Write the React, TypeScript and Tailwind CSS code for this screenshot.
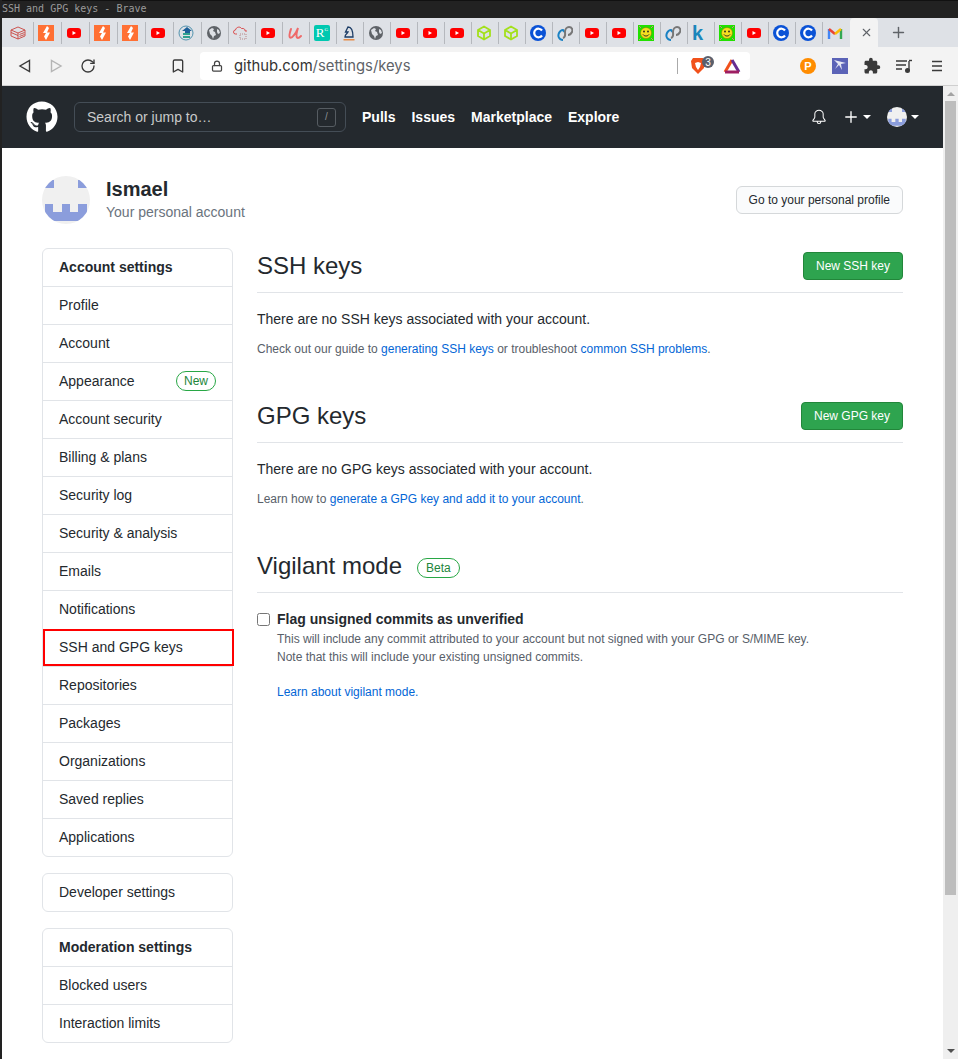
import { GoBell } from 'react-icons/go';
import { FaGithub } from 'react-icons/fa';
import { MdExtension } from 'react-icons/md';
import { Bookmark, Lock, RotateCw, Plus, X } from 'lucide-react';

const YouTube = () => (
  <svg width="16" height="16" viewBox="0 0 16 16">
    <rect x="1" y="3" width="14" height="10" rx="3" fill="#ff0000" />
    <path d="M6.500 6 10 8l-3.500 2z" fill="#fff" />
  </svg>
);

const Bolt = () => (
  <svg width="16" height="16" viewBox="0 0 16 16">
    <rect width="16" height="16" fill="#ff7034" />
    <path d="M9 1 5 8h3l-2 3.500L8 15l4-7.500H9l2-4.500z" fill="#fff" />
  </svg>
);

const Globe = () => (
  <svg width="16" height="16" viewBox="0 0 16 16">
    <circle cx="8" cy="8" r="7" fill="#5f6368" />
    <path d="M3 5l3-2 2 1-1 2 2 1 1 3-2 1-1 3-1-3-2-2zM11 4l2 1 1 3-2 1-1-2z" fill="#dee1e6" />
  </svg>
);

const Cube = () => (
  <svg width="16" height="16" viewBox="0 0 16 16" fill="none" stroke="#a3e01b" strokeWidth="1.800">
    <path d="M8 1.500 14 5v6l-6 3.500L2 11V5zM2 5l6 3.500L14 5M8 8.500v6" />
  </svg>
);

const BlueC = () => (
  <svg width="16" height="16" viewBox="0 0 16 16">
    <circle cx="8" cy="8" r="8" fill="#0a52d6" />
    <path d="M12 5.500a4.300 4.300 0 1 0 0 5" fill="none" stroke="#fff" strokeWidth="2.200" />
  </svg>
);

const Swirl = () => (
  <svg width="16" height="16" viewBox="0 0 16 16" fill="none" strokeWidth="2">
    <path d="M6 15C2 15 0.500 11 2 8c1-2 3-3 4-3l1.500 2" stroke="#1a82c4" />
    <path d="M6 13c3-1 2-4 2-6 0-3 2-5 4-5 3 0 4 3 3 5-1 2-3 3-4 3" stroke="#777" />
  </svg>
);

const Smiley = () => (
  <svg width="16" height="16" viewBox="0 0 16 16">
    <rect width="16" height="16" fill="#22e000" />
    <circle cx="8" cy="8" r="5.500" fill="#f5e020" stroke="#887000" strokeWidth="0.500" />
    <circle cx="6" cy="6.500" r="0.900" fill="#222" />
    <circle cx="10" cy="6.500" r="0.900" fill="#222" />
    <path d="M5 9.500c1.500 2 4.500 2 6 0" fill="none" stroke="#222" />
    <path d="M1 1l2 2M15 1l-2 2M1 15l2-2M15 15l-2-2" stroke="#c88" />
  </svg>
);

const Gmail = () => (
  <svg width="16" height="16" viewBox="0 0 16 16" fill="none" strokeWidth="2.400">
    <path d="M2 14V4" stroke="#4285f4" />
    <path d="M14 14V4" stroke="#34a853" />
    <path d="M2 4l6 5" stroke="#ea4335" />
    <path d="M8 9l6-5" stroke="#fbbc04" />
  </svg>
);

const Stack = () => (
  <svg width="16" height="16" viewBox="0 0 16 16" fill="none" stroke="#c9453f" strokeWidth="0.900">
    <path d="M1 5l7-3 7 3-7 3zM1 5v6l7 3 7-3V5M8 8v6M9.500 9.500l5-2M9.500 11.500l5-2" />
    <path d="M1 7.500l7 3" />
  </svg>
);

const Edu = () => (
  <svg width="16" height="16" viewBox="0 0 16 16">
    <circle cx="8" cy="8" r="7" fill="none" stroke="#2f7f9f" strokeWidth="0.800" />
    <rect x="5" y="8" width="7" height="2" fill="#2fa08f" />
    <rect x="5" y="11" width="7" height="2" fill="#2fa08f" />
    <path d="M9 2l5 4h-2v2H7V6H4z" fill="#1c5f98" />
  </svg>
);

const CloudRed = () => (
  <svg width="16" height="16" viewBox="0 0 16 16" fill="none" stroke="#d94040" strokeWidth="0.900">
    <path d="M4 9H2.500a2 2 0 0 1 0-4C3 2 7 1 8.500 3.500 11 3 12.500 4.500 12 6h2" />
    <path d="M7 9h6v5H7z" strokeDasharray="1 1" stroke="#b08080" />
  </svg>
);

const Udemy = () => (
  <svg width="16" height="16" viewBox="0 0 16 16" fill="none" stroke="#ee6a6a" strokeWidth="2" strokeLinecap="round">
    <path d="M4 4C3 7 1.500 11 3 12.500 5 14 9 8 11 3c-1 3-2 8-1 9.500 1 1 2.500 0 4-1.500" />
  </svg>
);

const RG = () => (
  <div className="flex h-4 w-4 items-center justify-center rounded-[2px] bg-[#00c8b0] font-['Liberation_Serif',serif] text-[13px] leading-none text-white">
    R<span className="mb-[6px] text-[5px]">G</span>
  </div>
);

const Knight = () => (
  <svg width="16" height="16" viewBox="0 0 16 16" fill="none">
    <path d="M4 12c0-3 2-3 3-5L4.500 7 7 2c4 0 5 4 5 10z" stroke="#1d3d66" strokeWidth="1.300" />
    <path d="M2.500 14.800h11" stroke="#e8761f" strokeWidth="1.200" />
  </svg>
);

const K = () => <span className="text-[20px] leading-4 font-bold text-[#1a86bb]">k</span>;

const tabIcons = [
  <Stack />, <Bolt />, <YouTube />, <Bolt />, <Bolt />, <YouTube />, <Edu />, <Globe />, <CloudRed />, <YouTube />,
  <Udemy />, <RG />, <Knight />, <Globe />, <YouTube />, <YouTube />, <YouTube />, <Cube />, <Cube />, <BlueC />,
  <Swirl />, <YouTube />, <YouTube />, <Smiley />, <Swirl />, <K />, <Smiley />, <YouTube />, <BlueC />, <BlueC />,
  <Gmail />,
];

const accountLinks = [
  'Profile',
  'Account',
  'Appearance',
  'Account security',
  'Billing & plans',
  'Security log',
  'Security & analysis',
  'Emails',
  'Notifications',
  'SSH and GPG keys',
  'Repositories',
  'Packages',
  'Organizations',
  'Saved replies',
  'Applications',
];

const Avatar = ({ size }: { size: number }) => (
  <svg width={size} height={size} viewBox="0 0 48 48" className="block">
    <rect width="48" height="48" fill="#f0f0f0" />
    <path d="M3 4h9v8H3zM36 4h9v8h-9z" fill="#8b9ddc" />
    <path d="M3 28h8v8h9v-8h8v8h8v-8h9v17H3z" fill="#8b9ddc" />
  </svg>
);

const SideRow = ({ label, head, boxed }: { label: string; head?: boolean; boxed?: boolean }) => (
  <div
    className={`flex items-center justify-between pb-px text-sm ${head ? 'font-bold' : ''} ${
      boxed
        ? 'mr-[-2px] mt-px h-[37px] border-2 border-[#ff0000] pl-[14px] pr-4'
        : 'h-[38px] border-t border-[#e1e4e8] px-4 first:h-[37px] first:border-t-0'
    }`}
  >
    {label}
    {label === 'Appearance' && (
      <span className="rounded-full border border-[#28a745] px-[7px] text-xs leading-[18px] text-[#22863a]">New</span>
    )}
  </div>
);

const SectionHead = ({ title, button }: { title: string; button?: string }) => (
  <div className="flex h-[45px] items-start justify-between border-b border-[#e1e4e8] pt-1">
    <h2 className="text-2xl leading-[28px] font-normal">{title}</h2>
    {button && (
      <button className="h-[28px] rounded-[4px] border border-[#22863a] bg-[#2ea44f] px-3 text-xs text-white">
        {button}
      </button>
    )}
  </div>
);

export default function App() {
  return (
    <div className="flex h-[1059px] w-[958px] flex-col overflow-hidden border-l-2 border-[#222222] bg-white font-['Liberation_Sans',sans-serif] text-[#24292e]">
      <div className="ml-[-2px] h-[18px] shrink-0 border-t border-[#111111] bg-[#222222] pl-[2px] font-['DejaVu_Sans_Mono',monospace] text-[10px] leading-[16px] text-[#9a9a9a]">
        SSH and GPG keys - Brave
      </div>

      {/* tab strip */}
      <div className="flex h-[29px] shrink-0 items-center bg-[#dee1e6] pl-[4px]">
        {tabIcons.map((icon, i) => (
          <div
            key={i}
            className={`flex h-[22px] shrink-0 items-center pl-[4px] ${i < 7 ? 'w-[28px]' : 'w-[27px]'} ${
              i < 30 ? 'border-r border-[#b5b8bd]' : ''
            }`}
          >
            {icon}
          </div>
        ))}
        <div className="flex h-[29px] w-[28px] shrink-0 items-center justify-center rounded-t-[4px] bg-[#f3f3f3] pl-[4px]">
          <X size={13} className="text-[#5f6368]" strokeWidth={2} />
        </div>
        <Plus size={17} className="ml-[12px] text-[#5f6368]" strokeWidth={2} />
      </div>

      {/* toolbar */}
      <div className="flex h-[39px] shrink-0 items-center border-b border-[#cfcfcf] bg-[#f3f3f3]">
        <svg width="16" height="16" viewBox="0 0 16 16" className="ml-[15px]" fill="none" stroke="#3a3a3a" strokeWidth="1.400">
          <path d="M12.500 2.500v11L3 8z" />
        </svg>
        <svg width="16" height="16" viewBox="0 0 16 16" className="ml-[15px]" fill="none" stroke="#b5b5b5" strokeWidth="1.400">
          <path d="M3.500 2.500v11L13 8z" />
        </svg>
        <RotateCw size={16} className="ml-[16px] text-[#3a3a3a]" strokeWidth={2} />
        <Bookmark size={16} className="ml-[74px] text-[#3a3a3a]" strokeWidth={2} />
        <div className="ml-[14px] flex h-[28px] w-[550px] items-center rounded-[4px] bg-white pl-[11px] pr-[9px]">
          <Lock size={12} className="text-[#444444]" strokeWidth={2.500} />
          <span className="ml-[11px] font-['Inter',sans-serif] text-[14.800px] text-[#5f6368]">
            <span className="text-[#333333]">github.com</span>/settings/keys
          </span>
          <div className="ml-auto h-4 w-px bg-[#aaaaaa]" />
          <div className="relative ml-[12px]">
            <svg width="16" height="18" viewBox="0 0 16 18" className="block">
              <path d="M3 1h10l2 3-1 7-6 6-6-6-1-7z" fill="#f1511b" />
              <path d="M5 6l3-1 3 1-1 4-2 3-2-3z" fill="#fff" />
            </svg>
            <span className="absolute left-[12px] top-[-1px] flex h-3 w-3 items-center justify-center rounded-full bg-[#5a5f6b] text-[10px] text-white">
              3
            </span>
          </div>
          <svg width="18" height="16" viewBox="0 0 18 16" className="ml-[17px]" fill="none" strokeWidth="3">
            <path d="M9 2 2 14" stroke="#f1511b" />
            <path d="M9 2l7 12" stroke="#662d91" />
            <path d="M2 14h14" stroke="#9e1f63" />
          </svg>
        </div>
        <div className="ml-[50px] flex h-4 w-4 items-center justify-center rounded-full bg-[#ff8c00] text-[11px] font-bold leading-none text-white">P</div>
        <svg width="16" height="16" viewBox="0 0 16 16" className="ml-[16px]">
          <rect width="16" height="16" fill="#5b63b7" />
          <path d="M2 2l12 3-5 1 1 6-3-5-4 4 3-5z" fill="#ffffff" opacity="0.850" />
        </svg>
        <MdExtension size={18} className="ml-[15px] text-[#3a3a3a]" />
        <svg width="18" height="16" viewBox="0 0 18 16" className="ml-[14px]" fill="none" stroke="#3a3a3a" strokeWidth="1.400">
          <path d="M1 3h11M1 7h10M1 11h6M14 3v9" />
          <circle cx="12.500" cy="12.500" r="1.800" fill="#3a3a3a" />
          <path d="M14 2.500h3" />
        </svg>
        <svg width="14" height="14" viewBox="0 0 14 14" className="ml-[17px]" stroke="#3a3a3a" strokeWidth="1.500">
          <path d="M2 2.500h10M2 7h10M2 11.500h10" />
        </svg>
      </div>

      <div className="flex min-h-0 flex-1">
        <div className="flex min-w-0 flex-1 flex-col">
          {/* github header */}
          <header className="flex h-[62px] shrink-0 items-center bg-[#24292e] px-6 text-white">
            <FaGithub size={32} />
            <div className="ml-4 flex h-[30px] w-[272px] items-center justify-between rounded-[6px] border border-[#444d56] pl-3 pr-[9px] text-sm text-[#c8c9ca]">
              Search or jump to…
              <span className="flex h-[19px] w-[19px] items-center justify-center rounded-[3px] border border-[#565c62] text-[10px] text-[#8b9095]">/</span>
            </div>
            <nav className="ml-4 flex gap-4 text-sm font-bold">
              <span>Pulls</span>
              <span>Issues</span>
              <span>Marketplace</span>
              <span>Explore</span>
            </nav>
            <GoBell size={16} className="ml-auto" />
            <Plus size={18} className="ml-[15px]" strokeWidth={1.800} />
            <span className="ml-[3px] h-0 w-0 border-x-4 border-t-4 border-x-transparent border-t-white" />
            <div className="ml-[16px] h-5 w-5 overflow-hidden rounded-full">
              <Avatar size={20} />
            </div>
            <span className="ml-[4px] h-0 w-0 border-x-4 border-t-4 border-x-transparent border-t-white" />
          </header>

          <main className="min-h-0 flex-1 px-10 pt-7">
            {/* account heading */}
            <div className="flex h-[48px] items-center">
              <div className="h-12 w-12 overflow-hidden rounded-full">
                <Avatar size={48} />
              </div>
              <div className="mb-[2px] ml-4">
                <div className="text-xl font-bold leading-[26px]">Ismael</div>
                <div className="text-sm leading-[20px] text-[#6a737d]">Your personal account</div>
              </div>
              <button className="ml-auto h-[28px] rounded-[6px] border border-[#d5d8da] bg-[#fafbfc] px-3 text-xs">
                Go to your personal profile
              </button>
            </div>

            <div className="mt-6 flex gap-6">
              <aside className="w-[191px] shrink-0">
                <div className="rounded-[6px] border border-[#e1e4e8]">
                  <SideRow label="Account settings" head />
                  {accountLinks.map(label => (
                    <SideRow key={label} label={label} boxed={label === 'SSH and GPG keys'} />
                  ))}
                </div>
                <div className="mt-4 rounded-[6px] border border-[#e1e4e8]">
                  <SideRow label="Developer settings" />
                </div>
                <div className="mt-4 rounded-[6px] border border-[#e1e4e8]">
                  <SideRow label="Moderation settings" head />
                  <SideRow label="Blocked users" />
                  <SideRow label="Interaction limits" />
                </div>
              </aside>

              <section className="min-w-0 flex-1">
                <SectionHead title="SSH keys" button="New SSH key" />
                <p className="mt-4 text-sm leading-[21px]">There are no SSH keys associated with your account.</p>
                <p className="mt-[9px] text-xs leading-[20px] text-[#586069]">
                  Check out our guide to <a className="text-[#0366d6]">generating SSH keys</a> or troubleshoot{' '}
                  <a className="text-[#0366d6]">common SSH problems</a>.
                </p>

                <div className="mt-[39px]">
                  <SectionHead title="GPG keys" button="New GPG key" />
                </div>
                <p className="mt-4 text-sm leading-[21px]">There are no GPG keys associated with your account.</p>
                <p className="mt-[9px] text-xs leading-[20px] text-[#586069]">
                  Learn how to <a className="text-[#0366d6]">generate a GPG key and add it to your account</a>.
                </p>

                <div className="mt-[39px] flex h-[45px] items-start border-b border-[#e1e4e8] pt-1">
                  <h2 className="text-2xl leading-[28px] font-normal">Vigilant mode</h2>
                  <span className="ml-[15px] mt-[6px] rounded-full border border-[#28a745] px-[8px] text-xs leading-[18px] text-[#22863a]">Beta</span>
                </div>
                <div className="mt-4 flex">
                  <input type="checkbox" className="mt-[4px] h-[13px] w-[13px] appearance-auto" />
                  <div className="ml-[7px]">
                    <div className="text-sm font-bold leading-[20px]">Flag unsigned commits as unverified</div>
                    <div className="mt-px text-xs leading-[18px] text-[#586069]">
                      This will include any commit attributed to your account but not signed with your GPG or S/MIME key.
                      <br />
                      Note that this will include your existing unsigned commits.
                    </div>
                    <a className="mt-[17px] block text-xs leading-[18px] text-[#0366d6]">Learn about vigilant mode.</a>
                  </div>
                </div>
              </section>
            </div>
          </main>
        </div>

        {/* page scrollbar */}
        <div className="flex w-[15px] shrink-0 flex-col items-center bg-[#efefef]">
          <span className="mt-[6px] h-0 w-0 border-x-[4px] border-b-[4px] border-x-transparent border-b-[#a3a3a3]" />
          <div className="mt-[5px] h-[794px] w-[11px] bg-[#bdbdbd]" />
          <span className="mb-[6px] mt-auto h-0 w-0 border-x-[4px] border-t-[4px] border-x-transparent border-t-[#505050]" />
        </div>
      </div>
    </div>
  );
}
